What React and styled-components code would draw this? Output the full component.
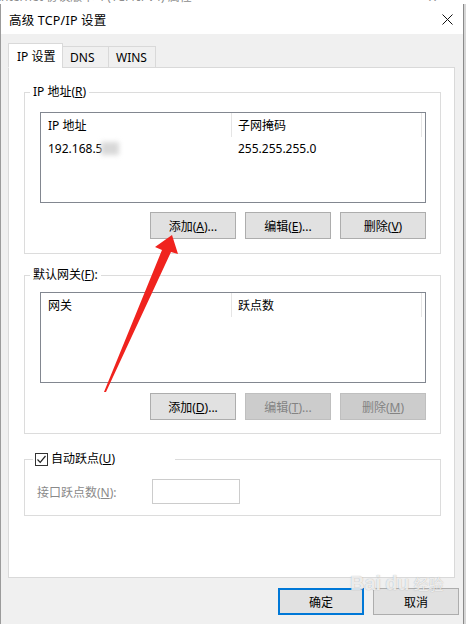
import React from "react";
import styled, { createGlobalStyle } from "styled-components";

const GlobalStyle = createGlobalStyle`
  html, body { margin: 0; padding: 0; }
  body {
    background: #d6d6d6;
    font-family: "Noto Sans", "Noto Sans CJK SC", sans-serif;
    font-size: 12px;
    color: #000;
  }
`;

const Page = styled.div`
  position: relative;
  width: 466px;
  height: 624px;
  overflow: hidden;
  display: flex;
  flex-direction: column;
  background: #d6d6d6;
`;

const BackWindow = styled.div`
  height: 4px;
  width: 466px;
  overflow: hidden;
  background: #fff;
  display: flex;
  justify-content: space-between;
  color: #8d8d8d;
  font-size: 12px;
  line-height: 14px;
`;

const BackTitle = styled.span`
  margin-top: -10px;
  margin-left: -3px;
  white-space: nowrap;
`;

const BackClose = styled.span`
  margin-top: -10px;
  margin-right: 30px;
`;

const Dialog = styled.div`
  width: 462px;
  flex: 1;
  display: flex;
  flex-direction: column;
  background: #f0f0f0;
  border-left: 1px solid #9b9b9b;
  border-right: 1px solid #8a8a8a;
`;

const TitleBar = styled.div`
  height: 30px;
  background: #fff;
  display: flex;
  align-items: center;
  justify-content: space-between;
  padding: 0 10px 0 8px;
`;

const TitleText = styled.span`
  font-size: 12.5px;
  letter-spacing: 0.2px;
`;

const Body = styled.div`
  padding: 9px 7px 0 7px;
  display: flex;
  flex-direction: column;
`;

const TabRow = styled.div`
  display: flex;
  align-items: flex-end;
  height: 25px;
  margin-bottom: -1px;
  position: relative;
  z-index: 1;
`;

const Tab = styled.div`
  box-sizing: border-box;
  width: ${(p) => p.$w}px;
  height: ${(p) => (p.$active ? 25 : 22)}px;
  display: flex;
  align-items: center;
  padding-left: ${(p) => (p.$active ? 8 : 7)}px;
  background: ${(p) => (p.$active ? "#fff" : "#f0f0f0")};
  border: 1px solid #d9d9d9;
  border-bottom: ${(p) => (p.$active ? "1px solid #fff" : "1px solid #d9d9d9")};
  margin-left: ${(p) => (p.$active ? 0 : -1)}px;
  font-size: 12px;
`;

const Panel = styled.div`
  box-sizing: border-box;
  width: 447px;
  height: 511px;
  background: #fff;
  border: 1px solid #d9d9d9;
  padding: 16px 13px 0 15px;
  display: flex;
  flex-direction: column;
`;

const Group = styled.fieldset`
  box-sizing: border-box;
  margin: ${(p) => p.$top}px 0 0 0;
  padding: ${(p) => p.$pad};
  border: 1px solid #dcdcdc;
  min-width: 0;
`;

/* The legend sits inside the fieldset's padding box, so its own
   margin pulls it back toward the frame's left edge. */
const Legend = styled.legend`
  margin-left: ${(p) => p.$shift}px;
  padding: 0 ${(p) => (p.$wide ? 2 : 3)}px;
  height: 16px;
  line-height: 16px;
  font-size: 12px;
  white-space: nowrap;
  min-width: ${(p) => p.$min || 0}px;
  box-sizing: border-box;
`;

const LegendCheck = styled.span`
  display: flex;
  align-items: center;
  gap: 3px;
  height: 16px;
`;

const ListBox = styled.div`
  box-sizing: border-box;
  height: 91px;
  border: 1px solid #828790;
  background: #fff;
  display: flex;
  flex-direction: column;
`;

const ListRow = styled.div`
  display: grid;
  grid-template-columns: 191px 190px 1fr;
  height: ${(p) => (p.$head ? 24 : 22)}px;
  align-items: center;
`;

const Cell = styled.div`
  height: 100%;
  display: flex;
  align-items: center;
  padding-left: ${(p) => (p.$first ? 7 : 6)}px;
  border-right: ${(p) => (p.$sep ? "1px solid #e5e5e5" : "none")};
  white-space: nowrap;
`;

const Blurred = styled.span`
  display: inline-block;
  width: 18px;
  height: 13px;
  margin-left: -1px;
  background: #d8d8d8;
  filter: blur(2.5px);
`;

const ButtonRow = styled.div`
  display: flex;
  justify-content: flex-end;
  gap: 9px;
  margin-top: ${(p) => p.$top}px;
`;

const Button = styled.button`
  box-sizing: border-box;
  width: 86px;
  height: 27px;
  padding: 0;
  font-family: inherit;
  font-size: 12px;
  background: ${(p) => (p.disabled ? "#cccccc" : "#e1e1e1")};
  color: ${(p) => (p.disabled ? "#838383" : "#000")};
  border: ${(p) =>
    p.$default ? "2px solid #0078d7" : p.disabled ? "1px solid #bfbfbf" : "1px solid #adadad"};
  cursor: default;
`;

const CheckBox = styled.span`
  box-sizing: border-box;
  width: 13px;
  height: 13px;
  border: 1px solid #333;
  background: #fff;
  display: inline-flex;
  align-items: center;
  justify-content: center;
`;

const MetricRow = styled.div`
  display: flex;
  align-items: center;
`;

const MutedLabel = styled.span`
  color: #8a8a8a;
  width: 115px;
`;

const TextBox = styled.div`
  box-sizing: border-box;
  width: 88px;
  height: 25px;
  border: 1px solid #cccccc;
  background: #fff;
`;

const Footer = styled.div`
  display: flex;
  justify-content: flex-end;
  gap: 9px;
  padding-top: 10px;
  margin-right: -3px;
`;

const Overlay = styled.svg`
  position: absolute;
  left: 0;
  top: 0;
  pointer-events: none;
`;

const Watermark = styled.div`
  position: absolute;
  left: 350px;
  top: 572px;
  display: flex;
  align-items: baseline;
  gap: 4px;
  color: rgba(255, 255, 255, 0.8);
  font-family: "Liberation Sans", "Noto Sans CJK SC", sans-serif;
  font-size: 20px;
  font-weight: bold;
  text-shadow: 0 0 1px rgba(110, 110, 110, 0.6);
  pointer-events: none;
`;

const WatermarkSub = styled.span`
  font-size: 15px;
  font-weight: normal;
`;

const Key = ({ k }) => <u>{k}</u>;

function CloseIcon() {
  return (
    <svg width="11" height="11" viewBox="0 0 11 11">
      <path d="M0.5 0.5 L10.5 10.5 M10.5 0.5 L0.5 10.5" stroke="#111" strokeWidth="1" />
    </svg>
  );
}

function Check() {
  return (
    <svg width="11" height="11" viewBox="0 0 11 11">
      <path d="M1.5 5.5 L4.2 8.3 L9.5 2" fill="none" stroke="#222" strokeWidth="1.2" />
    </svg>
  );
}

export default function App() {
  return (
    <Page>
      <GlobalStyle />
      <BackWindow>
        <BackTitle>Internet 协议版本 4 (TCP/IPv4) 属性</BackTitle>
        <BackClose>X</BackClose>
      </BackWindow>
      <Dialog>
        <TitleBar>
          <TitleText>高级 TCP/IP 设置</TitleText>
          <CloseIcon />
        </TitleBar>
        <Body>
          <TabRow>
            <Tab $active $w={55}>IP 设置</Tab>
            <Tab $w={47}>DNS</Tab>
            <Tab $w={48}>WINS</Tab>
          </TabRow>
          <Panel>
            <Group $top={0} $pad="12px 14px 14px 15px">
              <Legend $shift={-10}>
                IP 地址(<Key k="R" />)
              </Legend>
              <ListBox>
                <ListRow $head>
                  <Cell $first $sep>IP 地址</Cell>
                  <Cell $sep>子网掩码</Cell>
                  <Cell />
                </ListRow>
                <ListRow>
                  <Cell $first>
                    192.168.5<Blurred />
                  </Cell>
                  <Cell>255.255.255.0</Cell>
                  <Cell />
                </ListRow>
              </ListBox>
              <ButtonRow $top={9}>
                <Button>
                  添加(<Key k="A" />)...
                </Button>
                <Button>
                  编辑(<Key k="E" />)...
                </Button>
                <Button>
                  删除(<Key k="V" />)
                </Button>
              </ButtonRow>
            </Group>

            <Group $top={13} $pad="9px 14px 13px 15px">
              <Legend $shift={-10}>
                默认网关(<Key k="F" />):
              </Legend>
              <ListBox>
                <ListRow $head>
                  <Cell $first $sep>网关</Cell>
                  <Cell $sep>跃点数</Cell>
                  <Cell />
                </ListRow>
              </ListBox>
              <ButtonRow $top={10}>
                <Button>
                  添加(<Key k="D" />)...
                </Button>
                <Button disabled>
                  编辑(<Key k="T" />)...
                </Button>
                <Button disabled>
                  删除(<Key k="M" />)
                </Button>
              </ButtonRow>
            </Group>

            <Group $top={17} $pad="12px 14px 11px 12px">
              <Legend $shift={-4} $wide $min={142}>
                <LegendCheck>
                  <CheckBox>
                    <Check />
                  </CheckBox>
                  <span>
                    自动跃点(<Key k="U" />)
                  </span>
                </LegendCheck>
              </Legend>
              <MetricRow>
                <MutedLabel>
                  接口跃点数(<Key k="N" />):
                </MutedLabel>
                <TextBox />
              </MetricRow>
            </Group>
          </Panel>
          <Footer>
            <Button $default>确定</Button>
            <Button>取消</Button>
          </Footer>
        </Body>
      </Dialog>

      <Watermark>
        Bai<span>du</span>
        <WatermarkSub>经验</WatermarkSub>
      </Watermark>

      <Overlay width="466" height="624" viewBox="0 0 466 624">
        <polygon
          points="172,235 178,254 171,252 106,392 104,392 162,250 155,247"
          fill="#f0231e"
        />
      </Overlay>
    </Page>
  );
}
